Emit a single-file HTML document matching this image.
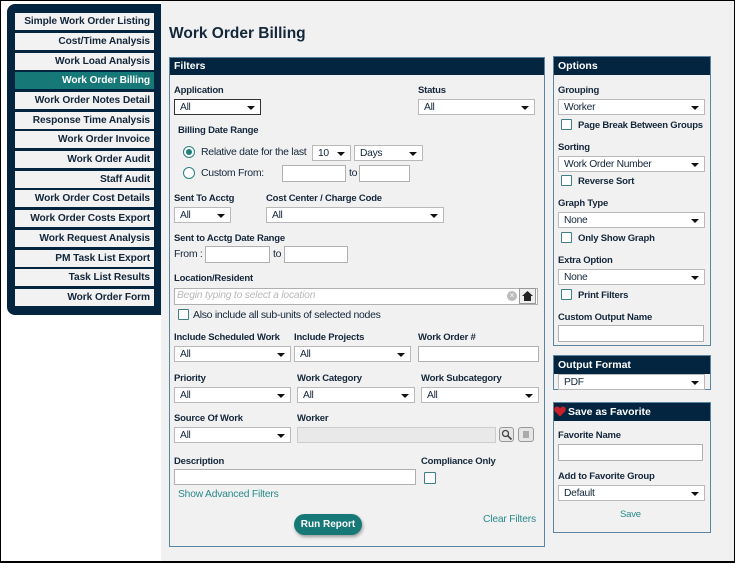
<!DOCTYPE html>
<html><head><meta charset="utf-8"><style>
*{box-sizing:border-box;margin:0;padding:0}
body{width:735px;height:563px;position:relative;overflow:hidden;background:#fff;font-family:"Liberation Sans",Arial,sans-serif;color:#14263a}
.frame{position:absolute;left:0;top:0;width:735px;height:563px;border:1px solid #000;border-bottom:2px solid #000;z-index:50;pointer-events:none}
.main{position:absolute;left:161px;top:1px;width:573px;height:560px;background:#f1f1f1}
.side{position:absolute;left:7px;top:4px;width:154px;height:311px;background:#03253f;border-radius:8px 0 0 8px}
.nav{position:absolute;left:15px;width:139px;height:17px;background:#f2f2f2;font-size:10.2px;letter-spacing:-0.1px;font-weight:bold;text-align:right;padding-right:4px;line-height:17px;color:#14263a;white-space:nowrap}
.nav.act{background:#177878;color:#fff}
.a{position:absolute;white-space:nowrap}
.l{font-size:9.5px;letter-spacing:-0.2px;font-weight:bold;color:#14263a}
.t{font-size:10.5px;letter-spacing:-0.3px;color:#14263a}
.panel{position:absolute;border:1px solid #5a86a3;background:#f1f1f1}
.ph{position:absolute;left:0;top:0;right:0;height:17px;background:#03253f;color:#fff;font-size:10.5px;font-weight:bold;line-height:17px;padding-left:4px}
.sel{position:absolute;height:16px;background:#fff;border:1px solid #b9b9b9;font-size:10.3px;letter-spacing:-0.3px;line-height:15px;padding-left:5px;color:#14263a;white-space:nowrap}
.sel:after{content:"";position:absolute;right:5px;top:6px;border-left:4px solid transparent;border-right:4px solid transparent;border-top:4px solid #111}
.inp{position:absolute;height:16px;background:#fff;border:1px solid #b0b0b0}
.cb{position:absolute;width:11px;height:11px;border:1px solid #3c7f86;background:#fff;border-radius:1px}
.rd{position:absolute;width:12px;height:12px;border:1px solid #2a8080;border-radius:50%;background:#fff}
.link{position:absolute;font-size:10.3px;letter-spacing:-0.2px;color:#2a8a8a;white-space:nowrap}
</style></head><body>
<div class="main"></div>
<div class="side"></div>
<div class="nav" style="top:13px">Simple Work Order Listing</div>
<div class="nav" style="top:33px">Cost/Time Analysis</div>
<div class="nav" style="top:53px">Work Load Analysis</div>
<div class="nav act" style="top:72px">Work Order Billing</div>
<div class="nav" style="top:92px">Work Order Notes Detail</div>
<div class="nav" style="top:112px">Response Time Analysis</div>
<div class="nav" style="top:131px">Work Order Invoice</div>
<div class="nav" style="top:151px">Work Order Audit</div>
<div class="nav" style="top:171px">Staff Audit</div>
<div class="nav" style="top:190px">Work Order Cost Details</div>
<div class="nav" style="top:210px">Work Order Costs Export</div>
<div class="nav" style="top:230px">Work Request Analysis</div>
<div class="nav" style="top:250px">PM Task List Export</div>
<div class="nav" style="top:269px">Task List Results</div>
<div class="nav" style="top:289px">Work Order Form</div>

<div class="a" style="left:169px;top:25px;font-size:15.5px;font-weight:bold;color:#14263a">Work Order Billing</div>

<div class="panel" style="left:169px;top:57px;width:376px;height:490px"><div class="ph">Filters</div></div>
<div class="a l" style="left:174px;top:85px">Application</div>
<div class="sel" style="left:174px;top:99px;width:87px;border:1px solid #333">All</div>
<div class="a l" style="left:418px;top:85px">Status</div>
<div class="sel" style="left:418px;top:99px;width:117px">All</div>
<div class="a l" style="left:178px;top:125px">Billing Date Range</div>
<div class="rd" style="left:183px;top:146px"><div style="position:absolute;left:2px;top:2px;width:6px;height:6px;border-radius:50%;background:#1f7f7f"></div></div>
<div class="a t" style="left:201px;top:146px">Relative date for the last</div>
<div class="sel" style="left:312px;top:145px;width:39px">10</div>
<div class="sel" style="left:354px;top:145px;width:69px">Days</div>
<div class="rd" style="left:183px;top:167px"></div>
<div class="a t" style="left:201px;top:167px">Custom From:</div>
<div class="inp" style="left:282px;top:165px;width:64px;height:17px"></div>
<div class="a t" style="left:349px;top:167px">to</div>
<div class="inp" style="left:359px;top:165px;width:51px;height:17px"></div>
<div class="a l" style="left:174px;top:193px">Sent To Acctg</div>
<div class="sel" style="left:174px;top:207px;width:57px">All</div>
<div class="a l" style="left:266px;top:193px">Cost Center / Charge Code</div>
<div class="sel" style="left:266px;top:207px;width:178px">All</div>
<div class="a l" style="left:174px;top:233px">Sent to Acctg Date Range</div>
<div class="a t" style="left:174px;top:248px">From :</div>
<div class="inp" style="left:205px;top:246px;width:65px;height:17px"></div>
<div class="a t" style="left:273px;top:248px">to</div>
<div class="inp" style="left:284px;top:246px;width:64px;height:17px"></div>
<div class="a l" style="left:174px;top:273px">Location/Resident</div>
<div class="inp" style="left:174px;top:288px;width:364px;height:17px"></div>
<div class="a" style="left:177px;top:290px;font-size:10.3px;letter-spacing:-0.2px;font-style:italic;color:#b8b8b8">Begin typing to select a location</div>
<div class="a" style="left:507px;top:291px;width:10px;height:10px;border-radius:50%;background:#bbb;color:#fff;font-size:8px;line-height:10px;text-align:center">×</div>
<div class="a" style="left:519px;top:288px;width:17px;height:16px;border:1px solid #999;background:#eee"><svg width="15" height="14" viewBox="0 0 15 14"><path d="M2 7 L7.5 2 L13 7 H11 V12 H4 V7Z" fill="#222"/></svg></div>
<div class="cb" style="left:178px;top:309px"></div>
<div class="a t" style="left:193px;top:309px">Also include all sub-units of selected nodes</div>
<div class="a l" style="left:174px;top:332px">Include Scheduled Work</div>
<div class="a l" style="left:294px;top:332px">Include Projects</div>
<div class="a l" style="left:418px;top:332px">Work Order #</div>
<div class="sel" style="left:174px;top:346px;width:117px">All</div>
<div class="sel" style="left:294px;top:346px;width:117px">All</div>
<div class="inp" style="left:418px;top:346px;width:121px"></div>
<div class="a l" style="left:174px;top:373px">Priority</div>
<div class="a l" style="left:297px;top:373px">Work Category</div>
<div class="a l" style="left:421px;top:373px">Work Subcategory</div>
<div class="sel" style="left:174px;top:387px;width:117px">All</div>
<div class="sel" style="left:297px;top:387px;width:118px">All</div>
<div class="sel" style="left:421px;top:387px;width:118px">All</div>
<div class="a l" style="left:174px;top:413px">Source Of Work</div>
<div class="a l" style="left:297px;top:413px">Worker</div>
<div class="sel" style="left:174px;top:427px;width:117px">All</div>
<div class="inp" style="left:297px;top:427px;width:199px;background:#e9e9e9;border-color:#ccc"></div>
<div class="a" style="left:499px;top:427px;width:15px;height:15px;border:1px solid #999;border-radius:3px;background:#e6e6e6"><svg width="13" height="13"><circle cx="5.5" cy="5.5" r="3" fill="none" stroke="#444" stroke-width="1.3"/><path d="M8 8 L11.5 11.5" stroke="#444" stroke-width="1.6"/></svg></div>
<div class="a" style="left:518px;top:427px;width:16px;height:15px;border:1px solid #999;border-radius:3px;background:#e6e6e6"><div style="margin:3px 4px;width:6px;height:7px;background:#aaa"></div></div>
<div class="a l" style="left:174px;top:456px">Description</div>
<div class="inp" style="left:174px;top:469px;width:242px"></div>
<div class="a l" style="left:421px;top:456px">Compliance Only</div>
<div class="cb" style="left:424px;top:472px;width:12px;height:12px"></div>
<div class="link" style="left:178px;top:489px">Show Advanced Filters</div>
<div class="a" style="left:294px;top:514px;width:68px;height:21px;border-radius:11px;background:#177878;color:#fff;font-size:10px;font-weight:bold;text-align:center;line-height:21px;box-shadow:1px 2px 3px rgba(0,0,0,.35)">Run Report</div>
<div class="link" style="left:483px;top:514px">Clear Filters</div>

<div class="panel" style="left:553px;top:56px;width:158px;height:290px"><div class="ph" style="height:18px;line-height:18px">Options</div></div>
<div class="a l" style="left:558px;top:85px">Grouping</div>
<div class="sel" style="left:558px;top:99px;width:147px">Worker</div>
<div class="cb" style="left:561px;top:119px"></div>
<div class="a l" style="left:578px;top:120px">Page Break Between Groups</div>
<div class="a l" style="left:558px;top:142px">Sorting</div>
<div class="sel" style="left:558px;top:156px;width:147px">Work Order Number</div>
<div class="cb" style="left:561px;top:175px"></div>
<div class="a l" style="left:578px;top:176px">Reverse Sort</div>
<div class="a l" style="left:558px;top:198px">Graph Type</div>
<div class="sel" style="left:558px;top:212px;width:147px">None</div>
<div class="cb" style="left:561px;top:232px"></div>
<div class="a l" style="left:578px;top:233px">Only Show Graph</div>
<div class="a l" style="left:558px;top:255px">Extra Option</div>
<div class="sel" style="left:558px;top:269px;width:147px">None</div>
<div class="cb" style="left:561px;top:289px"></div>
<div class="a l" style="left:578px;top:290px">Print Filters</div>
<div class="a l" style="left:558px;top:312px">Custom Output Name</div>
<div class="inp" style="left:558px;top:325px;width:146px;height:17px"></div>

<div class="panel" style="left:553px;top:355px;width:158px;height:35px"><div class="ph" style="height:18px;line-height:18px">Output Format</div></div>
<div class="sel" style="left:558px;top:374px;width:147px">PDF</div>

<div class="panel" style="left:553px;top:402px;width:158px;height:131px"><div class="ph" style="height:18px;line-height:18px;padding-left:14px">Save as Favorite</div></div>
<svg class="a" style="left:554px;top:406px" width="12" height="11" viewBox="0 0 12 11"><path d="M6 10.5 L1 5.5 C-0.5 3.8 0.5 0.5 3 0.5 C4.5 0.5 5.5 1.5 6 2.5 C6.5 1.5 7.5 0.5 9 0.5 C11.5 0.5 12.5 3.8 11 5.5Z" fill="#c8202a"/></svg>
<div class="a l" style="left:558px;top:430px">Favorite Name</div>
<div class="inp" style="left:558px;top:444px;width:145px;height:17px"></div>
<div class="a l" style="left:558px;top:471px">Add to Favorite Group</div>
<div class="sel" style="left:558px;top:485px;width:147px">Default</div>
<div class="link" style="left:620px;top:509px;font-size:9.5px">Save</div>
<div class="frame"></div>
</body></html>
